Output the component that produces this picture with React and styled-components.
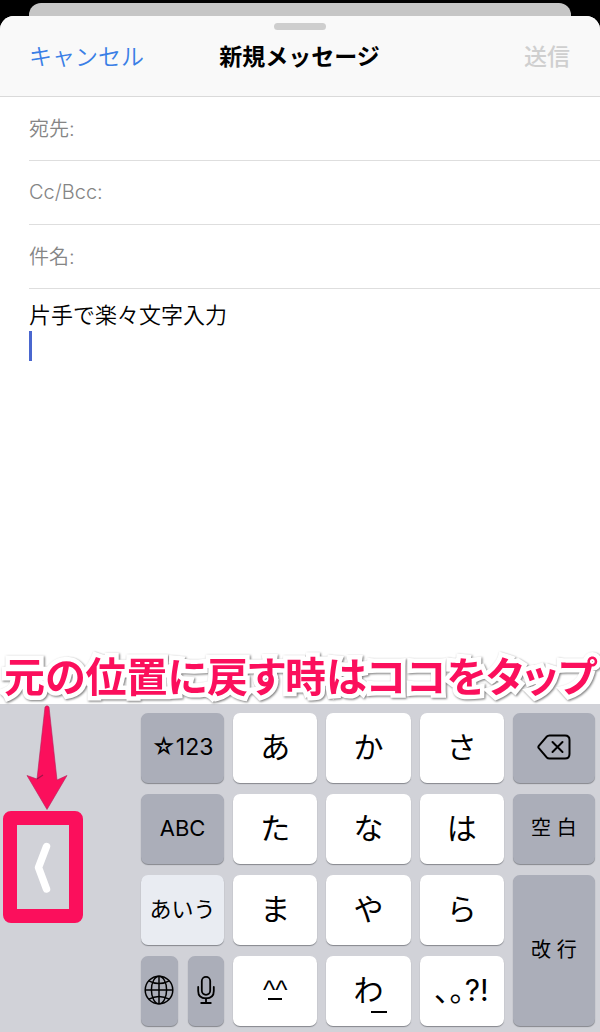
import React from "react";
import styled, { createGlobalStyle } from "styled-components";

const colors = {
  pink: "#fb0f5c",
  blue: "#3a7fe6",
  caret: "#4a67cf",
  keyboard: "#d1d2d8",
  darkKey: "#abaeb9",
  lightKey: "#e9ecf2",
};

const fields = [
  { id: "to", label: "宛先:" },
  { id: "cc", label: "Cc/Bcc:" },
  { id: "subject", label: "件名:" },
];

const App = () => {
  return (
    <Page>
      <GlobalStyle />
      <BackSheet />
      <Sheet>
        <Header>
          <Handle />
          <HeaderRow>
            <HeaderButton>キャンセル</HeaderButton>
            <Title>新規メッセージ</Title>
            <SendButton disabled>送信</SendButton>
          </HeaderRow>
        </Header>
        <Form>
          {fields.map(({ id, label }) => (
            <Field key={id}>
              <label htmlFor={id}>{label}</label>
              <input id={id} type="text" />
            </Field>
          ))}
          <Message
            aria-label="本文"
            rows={1}
            defaultValue="片手で楽々文字入力"
          />
          <Caret />
        </Form>
      </Sheet>
      <Keyboard>
        <Caption>元の位置に戻す時はココをタップ</Caption>
        <Side>
          <Arrow />
          <ExpandButton aria-label="元の位置に戻す">
            <Chevron />
          </ExpandButton>
        </Side>
        <Keys>
          <Key $tone="dark" $size={23}>
            ☆123
          </Key>
          <Key>あ</Key>
          <Key>か</Key>
          <Key>さ</Key>
          <Key $tone="dark" aria-label="削除">
            <DeleteIcon />
          </Key>

          <Key $tone="dark" $size={22}>
            ABC
          </Key>
          <Key>た</Key>
          <Key>な</Key>
          <Key>は</Key>
          <Key $tone="dark" $size={20}>
            空 白
          </Key>

          <Key $tone="light" $size={22}>
            あいう
          </Key>
          <Key>ま</Key>
          <Key>や</Key>
          <Key>ら</Key>
          <Key $tone="dark" $size={20} $tall>
            改 行
          </Key>

          <SplitKeys>
            <Key $tone="dark" aria-label="言語">
              <GlobeIcon />
            </Key>
            <Key $tone="dark" aria-label="音声入力">
              <MicIcon />
            </Key>
          </SplitKeys>
          <Key $size={26}>
            <Face>^^</Face>
          </Key>
          <Key>
            <Wa>わ</Wa>
          </Key>
          <Key>､｡?!</Key>
        </Keys>
      </Keyboard>
    </Page>
  );
};

export default App;

const Arrow = () => (
  <svg width="80" height="107" viewBox="3 704 80 107" aria-hidden="true">
    <path
      d="M45 707Q47 704.5 49 707L57 780L67 775.5L47 809.5L27 775.5L37 779Z"
      fill={colors.pink}
      stroke="#b5205a"
      strokeWidth="0.6"
      strokeLinejoin="round"
    />
    <path d="M37 779L43 775" stroke="#a01348" strokeWidth="1.2" />
  </svg>
);

const Chevron = () => (
  <svg width="52" height="84" viewBox="0 0 52 84" aria-hidden="true">
    <path
      d="M29.5 21.5L21.5 42.5L29.5 64"
      fill="none"
      stroke="#fff"
      strokeWidth="7.5"
      strokeLinecap="round"
      strokeLinejoin="round"
    />
  </svg>
);

const DeleteIcon = () => (
  <svg width="34" height="26" viewBox="0 0 34 26" aria-hidden="true">
    <g
      fill="none"
      stroke="#000"
      strokeWidth="2"
      strokeLinecap="round"
      strokeLinejoin="round"
    >
      <path d="M12.5 1.5H28Q32.5 1.5 32.5 6V20Q32.5 24.5 28 24.5H12.5Q10.8 24.5 9.5 23.2L1.8 14.2Q0.9 13 1.8 11.8L9.5 2.8Q10.8 1.5 12.5 1.5Z" />
      <path d="M15.5 8L25.5 18M25.5 8L15.5 18" />
    </g>
  </svg>
);

const GlobeIcon = () => (
  <svg width="30" height="30" viewBox="0 0 30 30" aria-hidden="true">
    <g fill="none" stroke="#000" strokeWidth="1.5">
      <circle cx="15" cy="15" r="13.8" />
      <ellipse cx="15" cy="15" rx="7.6" ry="13.8" />
      <path d="M15 1.2V28.8M1.2 15H28.8" />
      <path d="M4.8 5.8Q15 11.4 25.2 5.8M4.8 24.2Q15 18.6 25.2 24.2" />
    </g>
  </svg>
);

const MicIcon = () => (
  <svg width="18" height="30" viewBox="0 0 18 30" aria-hidden="true">
    <g fill="none" stroke="#000" strokeWidth="1.8" strokeLinecap="round">
      <rect x="4.8" y="1.8" width="8.4" height="18" rx="4.2" />
      <path d="M1.2 12V16Q1.2 23.3 9 23.3Q16.8 23.3 16.8 16V12" />
      <path d="M9 23.3V28M4.2 28H13.8" />
    </g>
  </svg>
);

const GlobalStyle = createGlobalStyle`
  * {
    box-sizing: border-box;
  }

  body {
    margin: 0;
    background-color: black;
    font-family: Inter, "Noto Sans CJK JP", sans-serif;
  }

  button,
  input,
  textarea {
    border: 0;
    padding: 0;
    background: none;
    font-family: inherit;
    outline: none;
  }

  svg {
    display: block;
  }
`;

const Page = styled.div`
  display: flex;
  flex-direction: column;
  min-height: 100vh;
  padding-top: 3px;
`;

const BackSheet = styled.div`
  height: 13px;
  margin: 0 29px;
  border-radius: 12px 12px 0 0;
  background-color: #c6c6c6;
`;

const Sheet = styled.main`
  display: flex;
  flex-direction: column;
  flex: 1;
  border-radius: 14px 14px 0 0;
  background-color: white;
  overflow: hidden;
`;

const Header = styled.header`
  display: flex;
  flex-direction: column;
  align-items: center;
  height: 81px;
  padding-top: 7px;
  border-bottom: 1px solid #dadada;
  background-color: #f9f9f9;
`;

const Handle = styled.div`
  width: 52px;
  height: 7px;
  border-radius: 4px;
  background-color: #cecece;
`;

const HeaderRow = styled.div`
  display: grid;
  grid-template-columns: 1fr auto 1fr;
  align-items: center;
  width: 100%;
  height: 54px;
  padding: 0 30px 0 29px;
`;

const HeaderButton = styled.button`
  justify-self: start;
  color: ${colors.blue};
  font-size: 23px;
  font-weight: 350;
  line-height: 32px;
`;

const SendButton = styled(HeaderButton)`
  justify-self: end;
  color: #cfcfcf;
  font-weight: 500;
`;

const Title = styled.h1`
  margin: 0;
  font-size: 23px;
  font-weight: 700;
  line-height: 32px;
`;

const Form = styled.div`
  padding-left: 29px;
`;

const Field = styled.div`
  display: flex;
  align-items: center;
  gap: 8px;
  height: 64px;
  padding-bottom: 2px;
  border-bottom: 1px solid #dedede;
  color: #858585;
  font-size: 20px;
  font-weight: 350;

  & > input {
    flex: 1;
    min-width: 0;
    font-size: 20px;
  }
`;

const Message = styled.textarea`
  display: block;
  width: 100%;
  margin-top: 10px;
  color: black;
  font-size: 22px;
  font-weight: 350;
  line-height: 32px;
  resize: none;
  overflow: hidden;
`;

const Caret = styled.div`
  width: 3px;
  height: 30px;
  background-color: ${colors.caret};
`;

const Keyboard = styled.section`
  position: relative;
  display: flex;
  background-color: ${colors.keyboard};
`;

const Caption = styled.p`
  position: absolute;
  left: 4px;
  bottom: 100%;
  margin: 0;
  color: ${colors.pink};
  font-family: "Noto Sans CJK JP", sans-serif;
  font-size: 41px;
  font-weight: 700;
  line-height: 60px;
  white-space: nowrap;
  font-feature-settings: "palt";
  paint-order: stroke fill;
  -webkit-text-stroke: 9px white;
  filter: drop-shadow(1px 1px 1px #777);
`;

const Side = styled.div`
  flex: none;
  width: 141px;
  padding-left: 3px;
`;

const ExpandButton = styled.button`
  display: block;
  border: 14px solid ${colors.pink};
  border-radius: 8px;
`;

const Keys = styled.div`
  display: grid;
  flex: 1;
  grid-template-columns: 83fr repeat(3, 84fr) 82fr;
  grid-auto-rows: 70px;
  gap: 11px 9px;
  padding: 9px 5px 6px 0;
`;

const keyColors = {
  dark: colors.darkKey,
  light: colors.lightKey,
  white: "white",
};

const Key = styled.button`
  display: flex;
  justify-content: center;
  align-items: center;
  grid-row: ${({ $tall }) => ($tall ? "3 / span 2" : "auto")};
  grid-column: ${({ $tall }) => ($tall ? "5" : "auto")};
  padding-bottom: 2px;
  border-radius: 7px;
  background-color: ${({ $tone = "white" }) => keyColors[$tone]};
  box-shadow: 0 1px 1px #85878d;
  color: black;
  font-size: ${({ $size = 30 }) => $size}px;
  line-height: 1;
  white-space: nowrap;
`;

const SplitKeys = styled.div`
  display: grid;
  grid-template-columns: 1fr 1fr;
  gap: 10px;
`;

const Glyphs = styled.span`
  position: relative;

  &::after {
    content: "";
    position: absolute;
    height: 2px;
    background-color: black;
  }
`;

const Face = styled(Glyphs)`
  font-family: "Liberation Sans", sans-serif;

  &::after {
    left: calc(50% - 7px);
    bottom: 3px;
    width: 14px;
  }
`;

const Wa = styled(Glyphs)`
  &::after {
    left: calc(50% + 3px);
    bottom: -8px;
    width: 16px;
  }
`;
